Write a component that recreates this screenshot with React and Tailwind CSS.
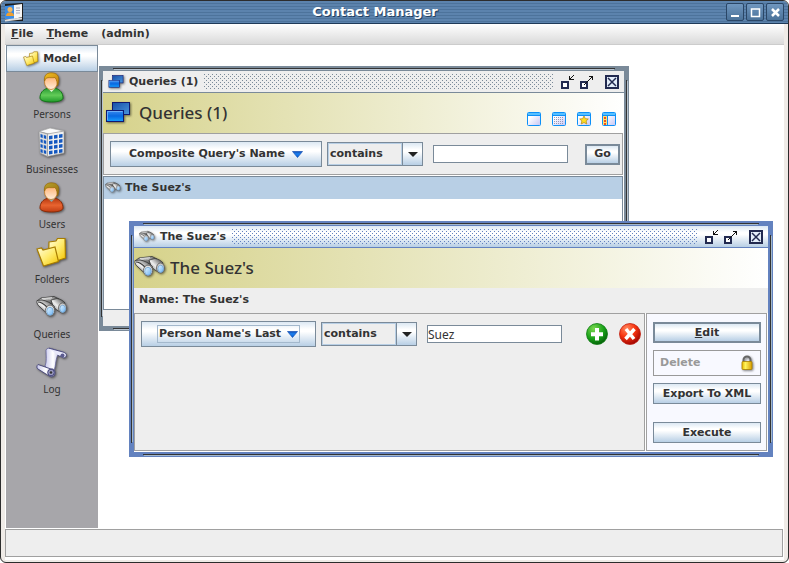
import React from "react";

const BTN = "bg-[linear-gradient(to_bottom,#dce8f3_0%,#ffffff_30%,#ffffff_40%,#b8cfe5_100%)]";

function Gradients() {
  return (
    <svg width="0" height="0" className="absolute" aria-hidden="true">
      <defs>
        <linearGradient id="green" x1="0" y1="0" x2="0" y2="1"><stop offset="0" stopColor="#2c9c34" /><stop offset="0.5" stopColor="#62cc58" /><stop offset="1" stopColor="#1f9a2a" /></linearGradient>
        <linearGradient id="orange" x1="0" y1="0" x2="0" y2="1"><stop offset="0" stopColor="#b83a10" /><stop offset="0.5" stopColor="#e86430" /><stop offset="1" stopColor="#c03c12" /></linearGradient>
        <linearGradient id="face" x1="0" y1="0" x2="0" y2="1"><stop offset="0" stopColor="#ffa860" /><stop offset="1" stopColor="#ffeedd" /></linearGradient>
        <linearGradient id="hair" x1="0" y1="0" x2="1" y2="1"><stop offset="0" stopColor="#f0c020" /><stop offset="1" stopColor="#c07c0c" /></linearGradient>
        <linearGradient id="hairdark" x1="0" y1="0" x2="1" y2="1"><stop offset="0" stopColor="#b8a02c" /><stop offset="1" stopColor="#94700c" /></linearGradient>
        <linearGradient id="folder" x1="0" y1="0" x2="1" y2="1"><stop offset="0" stopColor="#fffde0" /><stop offset="0.5" stopColor="#ffec70" /><stop offset="1" stopColor="#f4c400" /></linearGradient>
        <linearGradient id="metal" x1="0" y1="0" x2="1" y2="1"><stop offset="0" stopColor="#e0e0e0" /><stop offset="0.5" stopColor="#888" /><stop offset="1" stopColor="#333" /></linearGradient>
        <linearGradient id="barrel" x1="0" y1="1" x2="1" y2="0"><stop offset="0" stopColor="#444" /><stop offset="0.45" stopColor="#f0f0f0" /><stop offset="0.75" stopColor="#888" /><stop offset="1" stopColor="#333" /></linearGradient>
        <linearGradient id="lens" x1="0" y1="0" x2="1" y2="1"><stop offset="0" stopColor="#e4f4ff" /><stop offset="1" stopColor="#6eb4f4" /></linearGradient>
        <linearGradient id="blueback" x1="0" y1="0" x2="1" y2="1"><stop offset="0" stopColor="#164fa8" /><stop offset="1" stopColor="#4a94dc" /></linearGradient>
        <linearGradient id="bluefront" x1="0" y1="0" x2="0" y2="1"><stop offset="0" stopColor="#3c8cf0" /><stop offset="0.5" stopColor="#0868e0" /><stop offset="1" stopColor="#18a0ff" /></linearGradient>
        <linearGradient id="scroll" x1="0" y1="0" x2="1" y2="0"><stop offset="0" stopColor="#c8c8ec" /><stop offset="0.5" stopColor="#ffffff" /><stop offset="1" stopColor="#b0b0dc" /></linearGradient>
        <linearGradient id="pane" x1="0" y1="0" x2="1" y2="1"><stop offset="0.3" stopColor="#ffffff" /><stop offset="1" stopColor="#c4c4f4" /></linearGradient>
        <radialGradient id="add" cx="0.35" cy="0.25" r="0.8"><stop offset="0" stopColor="#7ad850" /><stop offset="0.6" stopColor="#18a018" /><stop offset="1" stopColor="#045c08" /></radialGradient>
        <radialGradient id="remove" cx="0.35" cy="0.25" r="0.8"><stop offset="0" stopColor="#ff8a60" /><stop offset="0.5" stopColor="#f83410" /><stop offset="1" stopColor="#980000" /></radialGradient>
        <linearGradient id="gold" x1="0" y1="0" x2="1" y2="0"><stop offset="0" stopColor="#e8b800" /><stop offset="0.35" stopColor="#fff45c" /><stop offset="1" stopColor="#d89c00" /></linearGradient>
        <linearGradient id="tri" x1="0" y1="0" x2="0" y2="1"><stop offset="0" stopColor="#1450b4" /><stop offset="0.4" stopColor="#1c80f0" /><stop offset="1" stopColor="#0860d0" /></linearGradient>
      </defs>
    </svg>
  );
}

const SHADOW = "drop-shadow-[1px_1px_1px_rgba(0,0,0,0.5)]";

function Person({ body, hair, edge, dark }) {
  return (
    <svg width="32" height="32" viewBox="0 0 32 32" className={SHADOW}>
      <path d="M4 26c0-5 3-8.500 7-9.500h9c4 1 7 4.500 7 9.500 0 2.500-5 4-11.500 4S4 28.500 4 26z" fill={body} stroke={edge} />
      <path d="M11.500 16l4 4 4-4z" fill={dark ? "#8aa8a8" : "#e8f8d8"} />
      <ellipse cx="15" cy="10" rx="6.500" ry="7.500" fill="url(#face)" stroke="#c07820" strokeWidth="0.800" />
      <path d="M8.500 9C8 4 10 1 15 .8c6 0 8.500 3 7.500 9-.2 2-.5 3.500-1.200 4.200 0-3-.3-6-2.300-8.500-3 .5-5 0-7 .2-2 .3-3 1.500-3.500 3.300z" fill={hair} stroke="#9a6808" strokeWidth="0.700" />
    </svg>
  );
}

function Building() {
  const rows = [0, 1, 2, 3];
  return (
    <svg width="32" height="32" viewBox="0 0 32 32" className={SHADOW}>
      <path d="M3 4.500L14 1l14 3-13 3.500z" fill="#fafafa" stroke="#aaa" strokeWidth="0.700" />
      <path d="M3 4.500L11.500 7v22.500L4 26z" fill="#dcdcdc" stroke="#999" strokeWidth="0.700" />
      <path d="M11.500 7L28 4v22l-16.500 3.500z" fill="#f0f0f0" stroke="#999" strokeWidth="0.700" />
      {rows.map((r) => (
        <g key={r} fill="#1458c0">
          <path d={`M4.500 ${7 + r * 5}l2.200 .8v3.200l-2.200-.8zM7.800 ${8 + r * 5}l2.400 .8v3.200l-2.400-.8z`} />
          <path d={`M13 ${9 + r * 5}l3.500-.5v3.500l-3.500 .5zM18 ${8.200 + r * 5}l3.500-.5v3.500l-3.500 .5zM23 ${7.400 + r * 5}l3.500-.5v3.500l-3.500 .5z`} />
        </g>
      ))}
    </svg>
  );
}

function Folder({ size = 32 }) {
  return (
    <svg width={size} height={size} viewBox="0 0 32 32" className={SHADOW}>
      <path d="M13 5l7-1 1.500-2.500H29l.5 19.500-9 3-8-2z" fill="url(#folder)" stroke="#a87c00" strokeWidth="1.200" />
      <path d="M1 12l4.500-1 1.500 2 12-3 3.500 14.500L7.500 29z" fill="url(#folder)" stroke="#a87c00" strokeWidth="1.200" />
    </svg>
  );
}

function Binoculars({ size = 32 }) {
  return (
    <svg width={size} height={size} viewBox="0 0 32 32" className={SHADOW}>
      <path d="M1 9l4-3 13-1.500 5 2.500-6 5.500z" fill="url(#metal)" stroke="#333" strokeWidth="0.800" />
      <path d="M4 9c4-2.500 9-2.500 14-1.500M6 6.500l10-.8" stroke="#ddd" strokeWidth="1" fill="none" />
      <path d="M15 8l6-1.500c3 .5 6 2 8 4.500l-4 9c-3-1-6-3-8-6z" fill="url(#barrel)" stroke="#333" strokeWidth="0.800" />
      <path d="M1 8.500c-.5 3 1 5 3 6.500l7 6.500 7.500-7C15 11 10 8.500 6 8z" fill="url(#barrel)" stroke="#333" strokeWidth="0.800" />
      <path d="M2 10c3 0 6 2 9 5" stroke="#333" strokeWidth="1.200" fill="none" />
      <ellipse cx="14" cy="18.500" rx="4.600" ry="5.400" fill="#ddd" stroke="#555" strokeWidth="0.800" />
      <ellipse cx="14" cy="19.300" rx="3.300" ry="4" fill="url(#lens)" stroke="#5490c8" strokeWidth="0.600" />
      <ellipse cx="26.500" cy="16" rx="4" ry="5" fill="#ccc" stroke="#555" strokeWidth="0.800" />
      <ellipse cx="26.700" cy="16.800" rx="2.800" ry="3.600" fill="url(#lens)" stroke="#5490c8" strokeWidth="0.600" />
    </svg>
  );
}

function Scroll() {
  return (
    <svg width="32" height="32" viewBox="0 0 32 32" className={SHADOW}>
      <path d="M10 3C11 1 13 1 15 1.500l10 3.500c-3 1-4 4-5 9-1 6-1 9-4 12l-7-7c2-4 1-11 1-16z" fill="url(#scroll)" stroke="#66669c" strokeWidth="0.800" />
      <path d="M13 1.200l14 3.800c3 1 4 2.500 3 4.500s-4 1.500-5-.5c-1 .5-2.500 0-3-1" fill="#e8e8fa" stroke="#444478" strokeWidth="0.900" />
      <circle cx="26.500" cy="8.500" r="2" fill="#5c5c90" />
      <path d="M2 17.500c-1.500 1-1.500 4 0 4.500l12 7.500c3 1 5-1 5-4s-2-4-4-3.500z" fill="url(#scroll)" stroke="#444478" strokeWidth="0.900" />
      <circle cx="15" cy="25.500" r="3.300" fill="#9c9cc4" stroke="#444478" />
      <circle cx="15" cy="25.500" r="1.300" fill="#333" />
    </svg>
  );
}

function Windows({ size = 26 }) {
  return (
    <svg width={size} height={size} viewBox="0 0 26 26" className={SHADOW}>
      <rect x="7.500" y="2.500" width="17" height="12" fill="url(#blueback)" stroke="#101870" />
      <rect x="1.500" y="10.500" width="17" height="11" fill="url(#bluefront)" stroke="#101870" />
      <path d="M2.500 20V11.500h15" fill="none" stroke="#7cb8f8" strokeWidth="0.800" />
    </svg>
  );
}

function AppIcon() {
  return (
    <svg width="20" height="20" viewBox="0 0 20 20">
      <path d="M1 2l18-1v18H1z" fill="#1c1c1c" />
      <path d="M1 4l9-1v14H1z" fill="#3c8ce4" />
      <path d="M10 3l8-1v13l-8 2z" fill="#f6f6f6" />
      <path d="M12 6h4M12 8.500h4M12 11h4" stroke="#aab" />
      <circle cx="6" cy="7.500" r="2.500" fill="#f4b860" />
      <path d="M2 14c0-5 8-5 8 0z" fill="#f0a030" />
      <path d="M1 17.500l17-2v2l-17 2z" fill="#ddd" />
    </svg>
  );
}

function ViewIcon({ kind }) {
  return (
    <svg width="14" height="14" viewBox="0 0 14 14">
      <rect x="0.500" y="0.500" width="13" height="13" rx="1" fill="url(#pane)" stroke="#0c90f8" />
      <path d="M1 2h12" stroke="#58c0ff" strokeWidth="2" />
      <path d="M1 3.500h12" stroke="#0c90f8" />
      {kind === "grid" && <path d="M2 5.500h10M2 7.500h10M2 9.500h10M2 11.500h10" stroke="#9898b8" strokeDasharray="1 1" />}
      {kind === "star" && <path d="M7 4l1.300 2.700 3 .3-2.200 2 .7 3L7 10.500 4.200 12l.7-3-2.200-2 3-.3z" fill="#ffdc20" stroke="#b89020" strokeWidth="0.800" />}
      {kind === "side" && (
        <g>
          <rect x="1" y="4" width="4" height="9" fill="#ffe070" />
          <path d="M3 5v2M3 8v2M3 11v2" stroke="#f05020" strokeWidth="2" />
          <path d="M5.500 4v9" stroke="#0c90f8" />
        </g>
      )}
    </svg>
  );
}

function Triangle() {
  return (
    <svg width="11" height="7" viewBox="0 0 11 7">
      <path d="M.5 .5h10L5.500 6.500z" fill="url(#tri)" stroke="#1450b4" strokeWidth="0.700" />
    </svg>
  );
}

function Lock() {
  return (
    <svg width="14" height="16" viewBox="0 0 14 16" className={SHADOW}>
      <path d="M3.500 8V5a3.500 3.500 0 0 1 7 0v3" fill="none" stroke="#666" strokeWidth="2" />
      <rect x="2" y="6.500" width="10" height="8" rx="1" fill="url(#gold)" stroke="#a88000" strokeWidth="0.800" />
    </svg>
  );
}

function Badge({ remove }) {
  return (
    <svg width="22" height="22" viewBox="0 0 22 22">
      <circle cx="11" cy="11" r="10.500" fill={remove ? "url(#remove)" : "url(#add)"} stroke={remove ? "#c02010" : "#0c7c10"} strokeWidth="0.800" />
      {remove ? (
        <path d="M7 6l8 10M15.500 6l-9 10" stroke="#fff" strokeWidth="3.500" />
      ) : (
        <path d="M11 5v12.500M5 11.200h12" stroke="#fff" strokeWidth="4" />
      )}
    </svg>
  );
}

function TitleButton({ label, children }) {
  return (
    <button type="button" aria-label={label} className="flex h-[18px] w-[18px] items-center justify-center rounded-xs border border-[#2a4666] bg-linear-to-b from-[#7097c0] to-[#4b7299]">
      <svg width="11" height="11" viewBox="0 0 11 11" stroke="#fff" fill="none" strokeWidth="2">{children}</svg>
    </button>
  );
}

function Frame({ active, label, place, children }) {
  const light = active ? "bg-[#a3b8cc]" : "bg-[#b8c4d0]";
  return (
    <section
      aria-label={label}
      className={`absolute flex flex-col p-[5px] ${place} ${active ? "bg-[#6382bf]" : "bg-[#7a8a99]"}`}
    >
      <div className="absolute inset-x-[14px] top-[2px] h-px bg-[#333]" />
      <div className={`absolute inset-x-[15px] top-[3px] h-px ${light}`} />
      <div className="absolute inset-x-[14px] bottom-[2px] h-px bg-[#333]" />
      <div className={`absolute inset-x-[15px] bottom-px h-px ${light}`} />
      <div className="absolute inset-y-[14px] left-[2px] w-px bg-[#333]" />
      <div className={`absolute inset-y-[15px] left-[3px] w-px ${light}`} />
      <div className="absolute inset-y-[14px] right-[2px] w-px bg-[#333]" />
      <div className={`absolute inset-y-[15px] right-px w-px ${light}`} />
      {children}
    </section>
  );
}

function FrameTitle({ active, icon, title }) {
  const dots = active
    ? "bg-[radial-gradient(circle_at_0.5px_0.5px,#6382bf_0.5px,transparent_0.6px),radial-gradient(circle_at_2.5px_2.5px,#6382bf_0.5px,transparent_0.6px)]"
    : "bg-[radial-gradient(circle_at_0.5px_0.5px,#7a8a99_0.5px,transparent_0.6px),radial-gradient(circle_at_2.5px_2.5px,#7a8a99_0.5px,transparent_0.6px)]";
  return (
    <div className={`flex h-[22px] shrink-0 items-center border-b pr-[5px] pl-[5px] ${active ? `border-[#6382bf] ${BTN}` : "border-[#7a8a99] bg-[#eeeeee]"}`}>
      {icon}
      <h2 className="ml-[5px]">{title}</h2>
      <div className={`mr-[7px] ml-[6px] h-4 flex-1 bg-size-[4px_4px] ${dots}`} />
      <button type="button" aria-label="Minimize" className="mr-[5px]">
        <svg width="14" height="16" viewBox="0 0 14 16" shapeRendering="crispEdges">
          <rect x="1" y="8" width="6" height="6" fill="#fff" stroke="#222a50" strokeWidth="2" />
          <path d="M8.500 2v4M8 5.500h5M9 5l4-4" stroke="#111" fill="none" />
        </svg>
      </button>
      <button type="button" aria-label="Maximize" className="mr-[11px]">
        <svg width="14" height="16" viewBox="0 0 14 16" shapeRendering="crispEdges">
          <rect x="1" y="8" width="6" height="6" fill="#fff" stroke="#222a50" strokeWidth="2" />
          <path d="M4 11l8-8M9 2.500h4M12.500 2v4" stroke="#111" fill="none" />
        </svg>
      </button>
      <button type="button" aria-label="Close">
        <svg width="14" height="14" viewBox="0 0 14 14">
          <rect x="1" y="1" width="12" height="12" fill="#e4eefa" stroke="#222a50" strokeWidth="2" />
          <path d="M3 3l8 8M11 3l-8 8" stroke="#222a50" strokeWidth="1.500" />
        </svg>
      </button>
    </div>
  );
}

function Heading({ icon, title, children }) {
  return (
    <header className="flex h-10 shrink-0 items-center bg-linear-to-r from-[#d6d28a] to-white pr-2">
      {icon}
      <h1 className="flex-1 font-['Noto_Sans',sans-serif] text-[17px] font-medium">{title}</h1>
      {children}
    </header>
  );
}

function Combo({ label }) {
  return (
    <div className="flex h-6 w-24 shrink-0 border border-[#7a8a99]">
      <select aria-label={label} className="min-w-0 flex-1 appearance-none border border-[#b8cfe5] bg-[#eeeeee] pl-px font-bold outline-none">
        <option>contains</option>
      </select>
      <span className={`pointer-events-none flex w-5 items-center justify-center border-l border-[#7a8a99] ${BTN}`}>
        <svg width="10" height="5" viewBox="0 0 10 5"><path d="M0 0h10L5 5z" fill="#222" /></svg>
      </span>
    </div>
  );
}

function SideButton({ className = "", children }) {
  return <button type="button" className={`h-[21px] border border-[#7a8a99] ${BTN} ${className}`}>{children}</button>;
}

const NAV = [
  ["Persons", <Person body="url(#green)" hair="url(#hair)" edge="#147818" />],
  ["Businesses", <Building />],
  ["Users", <Person body="url(#orange)" hair="url(#hairdark)" edge="#8c2c08" dark />],
  ["Folders", <Folder />],
  ["Queries", <Binoculars />],
  ["Log", <Scroll />],
];

export default function App() {
  return (
    <div className="flex h-screen min-h-[500px] flex-col overflow-hidden rounded-md border border-[#2c2c2c] bg-[#efebe7] font-['DejaVu_Sans',sans-serif] text-[11px] leading-4 font-bold text-[#333333]">
      <Gradients />
      <div className="flex h-[23px] shrink-0 items-center gap-[2px] border-b border-[#1f3a58] bg-[repeating-linear-gradient(to_bottom,#5c83ad_0px,#5c83ad_2px,#4d739b_2px,#4d739b_3px)] pr-[4px] pl-[3px]">
        <AppIcon />
        <span className="flex-1 text-center text-[13px] text-white [text-shadow:1px_1px_0_#24405f]">Contact Manager</span>
        <TitleButton label="Minimize window"><path d="M1 9h8" /></TitleButton>
        <TitleButton label="Maximize window"><path d="M1.500 2h8v7.500h-8z" strokeWidth="1.500" /></TitleButton>
        <TitleButton label="Close window"><path d="M2 2l7 7M9 2l-7 7" strokeWidth="2.500" /></TitleButton>
      </div>
      <div className="mr-[4px] mb-[2px] ml-[4px] flex flex-1 flex-col bg-white">
        <nav className="flex h-[21px] shrink-0 items-center gap-[13px] border-b border-[#cccccc] bg-linear-to-b from-white to-[#dadada] pl-[6px]">
          <button type="button"><u>F</u>ile</button>
          <button type="button"><u>T</u>heme</button>
          <button type="button">(admin)</button>
        </nav>
        <div className="flex flex-1">
          <aside className="ml-px flex w-[92px] shrink-0 flex-col bg-[#a7a6aa]">
            <button type="button" className={`flex h-[27px] items-center justify-center gap-[4px] border border-[#7a8a99] ${BTN}`}>
              <Folder size={16} />Model
            </button>
            {NAV.map(([name, icon]) => (
              <a key={name} href={`#${name}`} className="flex h-[55px] flex-col items-center font-['Noto_Sans',sans-serif] text-[10px] font-normal">
                {icon}
                <span className="mt-[2px]">{name}</span>
              </a>
            ))}
          </aside>
          <main className="relative flex-1">
            <Frame label="Queries" place="top-[21px] left-px h-[265px] w-[530px]">
              <div className="-ml-px flex flex-1 flex-col bg-white">
                <FrameTitle icon={<Windows size={16} />} title="Queries (1)" />
                <Heading icon={<span className="w-9 pl-[2px]"><Windows /></span>} title="Queries (1)">
                  <div className="mt-3 flex gap-[11px]">
                    {["plain", "grid", "star", "side"].map((k) => (
                      <button key={k} type="button" aria-label={`${k} view`}><ViewIcon kind={k} /></button>
                    ))}
                  </div>
                </Heading>
                <form className="mr-px flex h-[42px] shrink-0 items-center border border-[#a0a0a0] bg-[#eeeeee] pr-[2px] pl-[6px]">
                  <button type="button" className={`mr-[5px] flex h-[26px] w-[212px] items-center justify-center gap-[7px] border border-[#7a8a99] ${BTN}`}>
                    Composite Query's Name <Triangle />
                  </button>
                  <Combo label="Query name comparison" />
                  <input aria-label="Query name" className="ml-[10px] h-[18px] w-[135px] border border-[#7a8a99] bg-white px-px font-normal outline-none" />
                  <button type="button" className={`ml-auto h-[21px] w-[35px] border-2 border-[#7a8a99] leading-3 ${BTN}`}>Go</button>
                </form>
                <ul className="mt-px mr-px flex-1 border border-[#7a8a99] bg-white">
                  <li className="flex h-[22px] items-center gap-[4px] bg-[#b8cfe5] pl-px"><Binoculars size={16} />The Suez's</li>
                </ul>
                <div className="h-4 bg-[#eeeeee]" />
              </div>
            </Frame>
            <Frame active label="The Suez's" place="top-[176px] left-[31px] h-[236px] w-[644px]">
              <FrameTitle active icon={<Binoculars size={16} />} title="The Suez's" />
              <Heading icon={<span className="w-[36px]"><Binoculars /></span>} title="The Suez's" />
              <p className="h-[25px] shrink-0 bg-[#eeeeee] pt-1 pl-[5px]">Name: The Suez's</p>
              <div className="flex flex-1 gap-px bg-white pr-px pb-px">
                <form className="flex flex-1 items-start border border-[#a0a0a0] bg-[#eeeeee] pt-[7px] pr-[3px] pl-[6px]">
                  <button type="button" className={`mr-[5px] flex h-[26px] w-[175px] items-center justify-center border border-[#7a8a99] ${BTN}`}>
                    <span className="flex h-[18px] items-center gap-[6px] border border-[#a3b8cc] px-[1px]">Person Name's Last <Triangle /></span>
                  </button>
                  <div className="flex h-[26px] flex-1 items-center">
                    <Combo label="Last name comparison" />
                    <input aria-label="Last name" defaultValue="Suez" className="ml-[10px] h-[18px] w-[135px] border border-[#7a8a99] bg-white font-['Noto_Sans',sans-serif] text-[12px] font-normal outline-none" />
                    <button type="button" aria-label="Add condition" className="ml-auto"><Badge /></button>
                    <button type="button" aria-label="Remove condition" className="ml-[11px]"><Badge remove /></button>
                  </div>
                </form>
                <div className="flex w-[121px] flex-col border border-[#a0a0a0] bg-[#f8f9ff] pt-2 pr-[5px] pl-[6px]">
                  <SideButton className="border-2 leading-3"><u>E</u>dit</SideButton>
                  <button type="button" disabled className="mt-[7px] flex h-[26px] items-center justify-between border border-[#999999] px-[6px] text-[#999999]">Delete<Lock /></button>
                  <SideButton className="mt-[7px]">Export To XML</SideButton>
                  <SideButton className="mt-[18px]">Execute</SideButton>
                </div>
              </div>
            </Frame>
          </main>
        </div>
        <footer className="mt-px mr-px mb-[3px] h-7 shrink-0 border border-[#a0a0a0] bg-[#eeeeee]" />
      </div>
    </div>
  );
}
